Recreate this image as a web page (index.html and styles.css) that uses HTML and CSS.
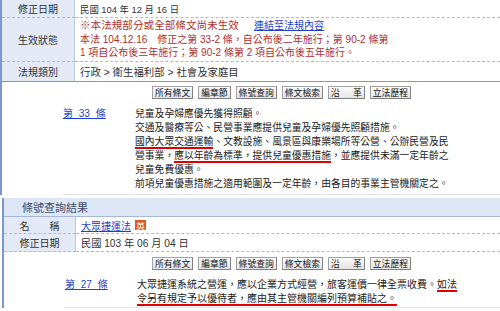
FILE: index.html
```html
<!DOCTYPE html>
<html lang="zh-Hant">
<head>
<meta charset="utf-8">
<link rel="stylesheet" href="styles.css">
</head>
<body>
<div class="sec1">
  <div class="grid g1">
    <div class="lab">修正日期</div>
    <div class="val date">民國 104 年 12 月 16 日</div>
    <div class="lab">生效狀態</div>
    <div class="val red"><span class="l1">※本法規部分或全部條文尚未生效</span><a class="lnk">連結至法規內容</a><br>本法 104.12.16　修正之第 33-2 條，自公布後二年施行；第 90-2 條第<br>1 項自公布後三年施行；第 90-2 條第 2 項自公布後五年施行。</div>
    <div class="lab last">法規類別</div>
    <div class="val last cat">行政 &gt; 衛生福利部 &gt; 社會及家庭目</div>
  </div>
  <div class="art">
    <div class="btns">
      <span class="btn">所有條文</span><span class="btn">編章節</span><span class="btn">條號查詢</span><span class="btn">條文檢索</span><span class="btn">沿&emsp;&ensp;革</span><span class="btn">立法歷程</span>
    </div>
    <div class="row r1">
      <a class="no">第 33 條</a>
      <div class="txt">兒童及孕婦應優先獲得照顧。<br>交通及醫療等公、民營事業應提供兒童及孕婦優先照顧措施。<br><span class="ul">國內大眾交通運輸</span>、文教設施、風景區與康樂場所等公營、公辦民營及民<br>營事業，<span class="ul">應以年齡為標準，提供兒童優惠措施</span>，並應提供未滿一定年齡之<br>兒童免費優惠。<br>前項兒童優惠措施之適用範圍及一定年齡，由各目的事業主管機關定之。</div>
    </div>
  </div>
</div>
<div class="sec2">
  <div class="hd">條號查詢結果</div>
  <div class="grid g2">
    <div class="lab">名&emsp;&emsp;稱</div>
    <div class="val"><a class="lnk">大眾捷運法</a><span class="en">英</span></div>
    <div class="lab last">修正日期</div>
    <div class="val last date d2">民國 103 年 06 月 04 日</div>
  </div>
  <div class="art">
    <div class="btns b2">
      <span class="btn">所有條文</span><span class="btn">編章節</span><span class="btn">條號查詢</span><span class="btn">條文檢索</span><span class="btn">沿&emsp;&ensp;革</span><span class="btn">立法歷程</span>
    </div>
    <div class="row r2">
      <a class="no">第 27 條</a>
      <div class="txt">大眾捷運系統之營運，應以企業方式經營，旅客運價一律全票收費。<span class="ul">如法</span><br><span class="ul">令另有規定予以優待者，應由其主管機關編列預算補貼之。</span></div>
    </div>
  </div>
</div>
</body>
</html>
```
FILE: styles.css
```css
* { box-sizing: border-box; }
html, body { margin: 0; padding: 0; }
body {
  width: 500px;
  height: 311px;
  overflow: hidden;
  background: #fff;
  color: #222;
  font-family: "Liberation Sans", "Noto Sans CJK TC", sans-serif;
}
.sec1 { border-left: 2px solid #7b97cc; }
.grid { display: grid; }
.g1 { grid-template-columns: 73px 1fr; grid-template-rows: 18px 44px 20px; }
.g2 { grid-template-columns: 72px 1fr; grid-template-rows: 17px 18px; }
.lab {
  background: #e3eaf6;
  border-right: 1px solid #b9c8e2;
  border-bottom: 1px dashed #a9badb;
  display: flex;
  align-items: center;
  justify-content: center;
  font-size: 10px;
  color: #333;
}
.val {
  padding-left: 5px;
  border-bottom: 1px dashed #a9badb;
  display: flex;
  align-items: center;
  font-size: 10.4px;
  color: #333;
  white-space: nowrap;
}
.g1 .last { border-bottom: 1px solid #7b97cc; }
.date { font-size: 9.4px; }
.d2 { font-size: 10.2px; }
.red {
  display: block;
  color: #b03030;
  line-height: 13.5px;
  padding-top: 1px;
  font-size: 10px;
}
.l1 { font-size: 10.6px; }
.lnk { color: #1f3fcc; text-decoration: underline; font-size: 10px; }
.red .lnk { margin-left: 15px; }
.cat { color: #333; }
.btns { display: flex; gap: 5px; padding-left: 150px; margin-top: 4px; }
.b2 { padding-left: 148px; margin-top: 5px; }
.btn {
  display: inline-flex;
  align-items: center;
  height: 13px;
  padding: 0 2px;
  font-size: 8.8px;
  color: #111;
  background: linear-gradient(#fbfbfb, #e4e4e4);
  border: 1px solid #a2a2a2;
  border-right-color: #808080;
  border-bottom-color: #808080;
  white-space: nowrap;
}
.row {
  display: flex;
  margin-left: 60px;
  border-bottom: 1px solid #e6e6e6;
  line-height: 14px;
}
.r1 { margin-top: 8px; padding-bottom: 3px; }
.r2 { margin-top: 8px; padding-bottom: 1px; }
.no {
  width: 73px;
  flex: none;
  padding-left: 1px;
  color: #1f3fcc;
  text-decoration: underline;
  font-size: 10px;
  word-spacing: 3px;
}
.txt { white-space: nowrap; font-size: 9.8px; color: #222; }
.r2 .txt { font-size: 10px; }
.ul { border-bottom: 2px solid #e00000; }
.sec2 { margin-left: 2px; margin-top: 3px; border-left: 2px solid #7b97cc; }
.hd {
  height: 19px;
  background: #dde6f4;
  border-bottom: 1px solid #a5b8da;
  padding-left: 18px;
  display: flex;
  align-items: center;
  font-size: 11px;
  color: #3e4d6b;
}
.en {
  display: inline-flex;
  align-items: center;
  justify-content: center;
  margin-left: 4px;
  width: 11px;
  height: 10px;
  background: #e05a1e;
  color: #fff;
  font-size: 8.5px;
}
```
